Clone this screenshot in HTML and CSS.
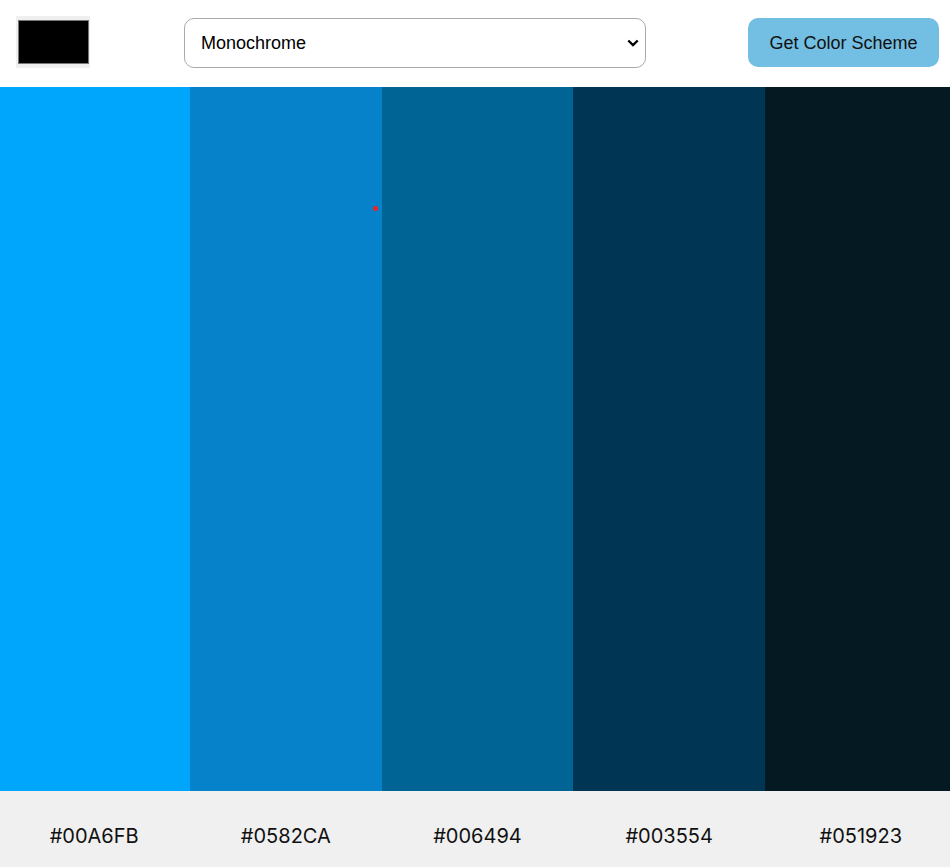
FILE: index.html
```html
<!DOCTYPE html>
<html lang="en">
<head>
<meta charset="utf-8">
<title>Color Scheme</title>
<link rel="stylesheet" href="styles.css">
</head>
<body>
<header class="toolbar">
  <input class="seed" type="color" value="#000000">
  <div class="mode-wrap">
    <select class="mode">
      <option>Monochrome</option>
      <option>Monochrome-dark</option>
      <option>Monochrome-light</option>
      <option>Analogic</option>
      <option>Complement</option>
    </select>
    <svg class="chev" width="12" height="8" viewBox="0 0 12 8" aria-hidden="true">
      <path d="M1.3 1.5 L6 6 L10.7 1.5" fill="none" stroke="#000" stroke-width="2.4"/>
    </svg>
  </div>
  <button class="get">Get Color Scheme</button>
</header>
<main class="scheme">
  <div class="col"><div class="swatch" style="background:#00A6FB"></div><div class="hex">#00A6FB</div></div>
  <div class="col"><div class="swatch" style="background:#0582CA"><span class="marker"></span></div><div class="hex">#0582CA</div></div>
  <div class="col"><div class="swatch" style="background:#006494"></div><div class="hex">#006494</div></div>
  <div class="col"><div class="swatch" style="background:#003554"></div><div class="hex">#003554</div></div>
  <div class="col"><div class="swatch" style="background:#051923"></div><div class="hex">#051923</div></div>
</main>
</body>
</html>
```
FILE: styles.css
```css
html, body {
  margin: 0;
  padding: 0;
  overflow: hidden;
  background: #fff;
}
body {
  width: 950px;
  height: 867px;
  font-family: "Liberation Sans", Arial, sans-serif;
}
.toolbar {
  height: 87px;
  box-sizing: border-box;
  display: flex;
  align-items: flex-start;
  padding: 17px 11px 0 16px;
}
.seed {
  -webkit-appearance: none;
  appearance: none;
  width: 74px;
  height: 52px;
  border: none;
  padding: 0;
  margin: -1px 0 0 0;
  background: #efefef;
  cursor: pointer;
}
.seed::-webkit-color-swatch-wrapper {
  padding: 4px 1px 4px 2px;
}
.seed::-webkit-color-swatch {
  border: 1px solid #777;
  border-radius: 0;
}
.mode-wrap {
  position: relative;
  margin: 1px 0 0 94px;
  width: 462px;
  height: 50px;
}
.mode {
  -webkit-appearance: none;
  appearance: none;
  width: 100%;
  height: 100%;
  box-sizing: border-box;
  border: 1px solid #aaa;
  border-radius: 10px;
  background: #fff;
  color: #000;
  font-family: "Liberation Sans", Arial, sans-serif;
  font-size: 18px;
  padding: 0 30px 0 16px;
  margin: 0;
}
.chev {
  position: absolute;
  left: 443px;
  top: 21px;
  pointer-events: none;
}
.get {
  margin: 1px 0 0 auto;
  width: 191px;
  height: 49px;
  border: none;
  border-radius: 10px;
  background: #73bee3;
  color: #111;
  font-family: "Liberation Sans", Arial, sans-serif;
  font-size: 18px;
  padding: 2px 0 0 0;
  cursor: pointer;
}
.scheme {
  display: grid;
  grid-template-columns: repeat(5, 191.67px);
  margin-left: -1.67px;
  width: 958.35px;
}
.col {
  display: flex;
  flex-direction: column;
}
.swatch {
  height: 704px;
  position: relative;
}
.hex {
  height: 76px;
  background: #f0f0f0;
  display: flex;
  align-items: center;
  justify-content: center;
  font-family: Inter, "Noto Sans", sans-serif;
  font-size: 20px;
  color: #111;
  padding-top: 13px;
  box-sizing: border-box;
}
.marker {
  position: absolute;
  left: 183px;
  top: 119px;
  width: 5px;
  height: 5px;
}
.marker::before, .marker::after {
  content: "";
  position: absolute;
  background: #e8262a;
}
.marker::before {
  left: 1px;
  top: 0;
  width: 3px;
  height: 5px;
}
.marker::after {
  left: 0;
  top: 1px;
  width: 5px;
  height: 3px;
}
```
